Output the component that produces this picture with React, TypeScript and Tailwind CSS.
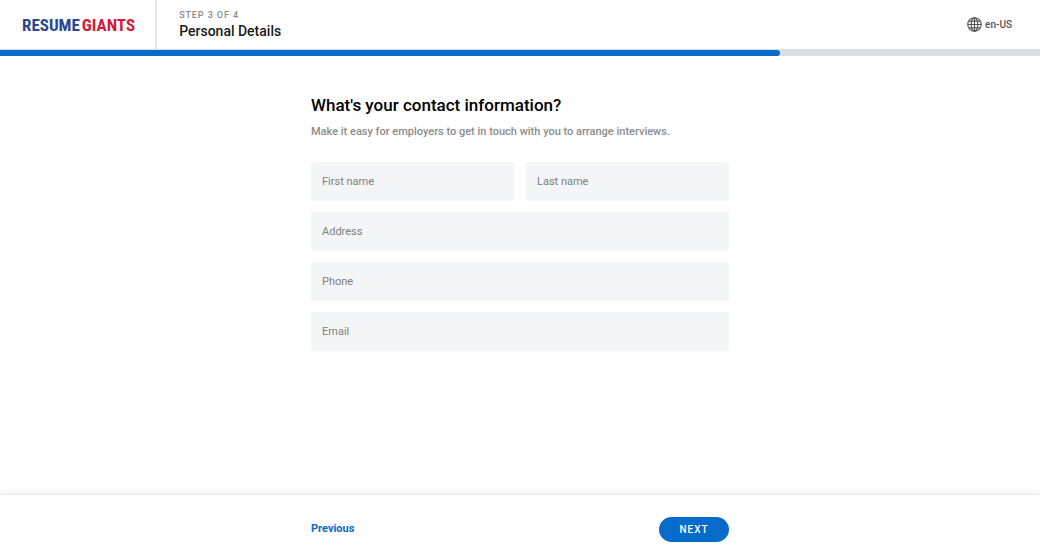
import { useState } from 'react';
import type { FormEvent } from 'react';

interface Field {
  name: string;
  label: string;
  type: string;
  autoComplete: string;
  half?: boolean;
}

const TOTAL_STEPS = 4;
const CURRENT_STEP = 3;

const FIELDS: Field[] = [
  { name: 'firstName', label: 'First name', type: 'text', autoComplete: 'given-name', half: true },
  { name: 'lastName', label: 'Last name', type: 'text', autoComplete: 'family-name', half: true },
  { name: 'address', label: 'Address', type: 'text', autoComplete: 'street-address' },
  { name: 'phone', label: 'Phone', type: 'tel', autoComplete: 'tel' },
  { name: 'email', label: 'Email', type: 'email', autoComplete: 'email' },
];

function GlobeIcon() {
  return (
    <svg
      className="size-[15px]"
      viewBox="0 0 16 16"
      fill="none"
      stroke="currentColor"
      strokeWidth="1.2"
      aria-hidden="true"
    >
      <circle cx="8" cy="8" r="7.2" />
      <ellipse cx="8" cy="8" rx="3.5" ry="7.2" />
      <path d="M8 .8v14.4M.8 8h14.4M1.9 4.4h12.2M1.9 11.6h12.2" />
    </svg>
  );
}

export default function App() {
  const [values, setValues] = useState<Record<string, string>>({});

  const handleSubmit = (e: FormEvent) => {
    e.preventDefault();
  };

  return (
    <div className="flex min-h-screen flex-col bg-white font-['Roboto',sans-serif] text-black">
      {/* Header */}
      <header className="flex h-[49px] items-stretch">
        <a
          href="#"
          className="flex items-center gap-0.5 border-r-2 border-[#e2e4e5] pr-5 pl-[22px] font-['Roboto_Condensed','Liberation_Sans_Narrow',sans-serif] text-[17px] leading-6 font-bold"
        >
          <span className="text-[#2b4595]">RESUME</span>
          <span className="text-[#d5193a]">GIANTS</span>
        </a>
        <div className="flex flex-col justify-center pt-0.5 pl-[22px]">
          <p className="text-[9px] leading-[10px] font-medium tracking-widest text-[#8a8a8a] uppercase">
            Step {CURRENT_STEP} of {TOTAL_STEPS}
          </p>
          <h1 className="text-sm leading-[22px] font-medium text-[#1a1a1a]">Personal Details</h1>
        </div>
        <button
          type="button"
          className="mr-7 ml-auto flex items-center gap-[3px] text-[10px] font-medium text-[#555]"
        >
          <GlobeIcon />
          en-US
        </button>
      </header>

      {/* Progress */}
      <div
        className="h-[7px] bg-[#dcdfe0] pt-px"
        role="progressbar"
        aria-label="Progress"
        aria-valuemin={0}
        aria-valuemax={TOTAL_STEPS}
        aria-valuenow={CURRENT_STEP}
      >
        <div
          className="h-full rounded-r-full bg-[#066bc9]"
          style={{ width: `${(CURRENT_STEP / TOTAL_STEPS) * 100}%` }}
        />
      </div>

      {/* Form */}
      <main className="mx-auto w-full max-w-[418px] flex-1 pt-[37px]">
        <h2 className="text-[17px] leading-6 font-medium">What's your contact information?</h2>
        <p className="mt-[5px] text-[11px] leading-5 font-medium text-[#8c8c8c]">
          Make it easy for employers to get in touch with you to arrange interviews.
        </p>
        <form
          id="contact"
          className="mt-5 grid grid-cols-2 gap-x-3 gap-y-[11px]"
          onSubmit={handleSubmit}
        >
          {FIELDS.map((field) => (
            <div key={field.name} className={field.half ? 'col-span-1' : 'col-span-2'}>
              <input
                id={field.name}
                name={field.name}
                type={field.type}
                autoComplete={field.autoComplete}
                aria-label={field.label}
                placeholder={field.label}
                value={values[field.name] ?? ''}
                onChange={(e) => setValues({ ...values, [field.name]: e.target.value })}
                className="block h-[39px] w-full rounded-xs bg-[#f3f5f6] px-[11px] text-[11px] text-[#222] outline-none placeholder:text-[#808080] focus:ring-1 focus:ring-[#066bc9]"
              />
            </div>
          ))}
        </form>
      </main>

      {/* Footer */}
      <footer className="border-t border-[#ececec] bg-white pt-[22px] pb-4 shadow-[0_-1px_6px_rgba(0,0,0,0.08)]">
        <div className="mx-auto flex w-full max-w-[418px] items-center justify-between">
          <a href="#" className="text-[11px] font-bold text-[#066bc9]">
            Previous
          </a>
          <button
            type="submit"
            form="contact"
            className="h-[25px] w-[70px] rounded-full bg-[#066bc9] text-[10px] font-medium tracking-widest text-white"
          >
            NEXT
          </button>
        </div>
      </footer>
    </div>
  );
}
